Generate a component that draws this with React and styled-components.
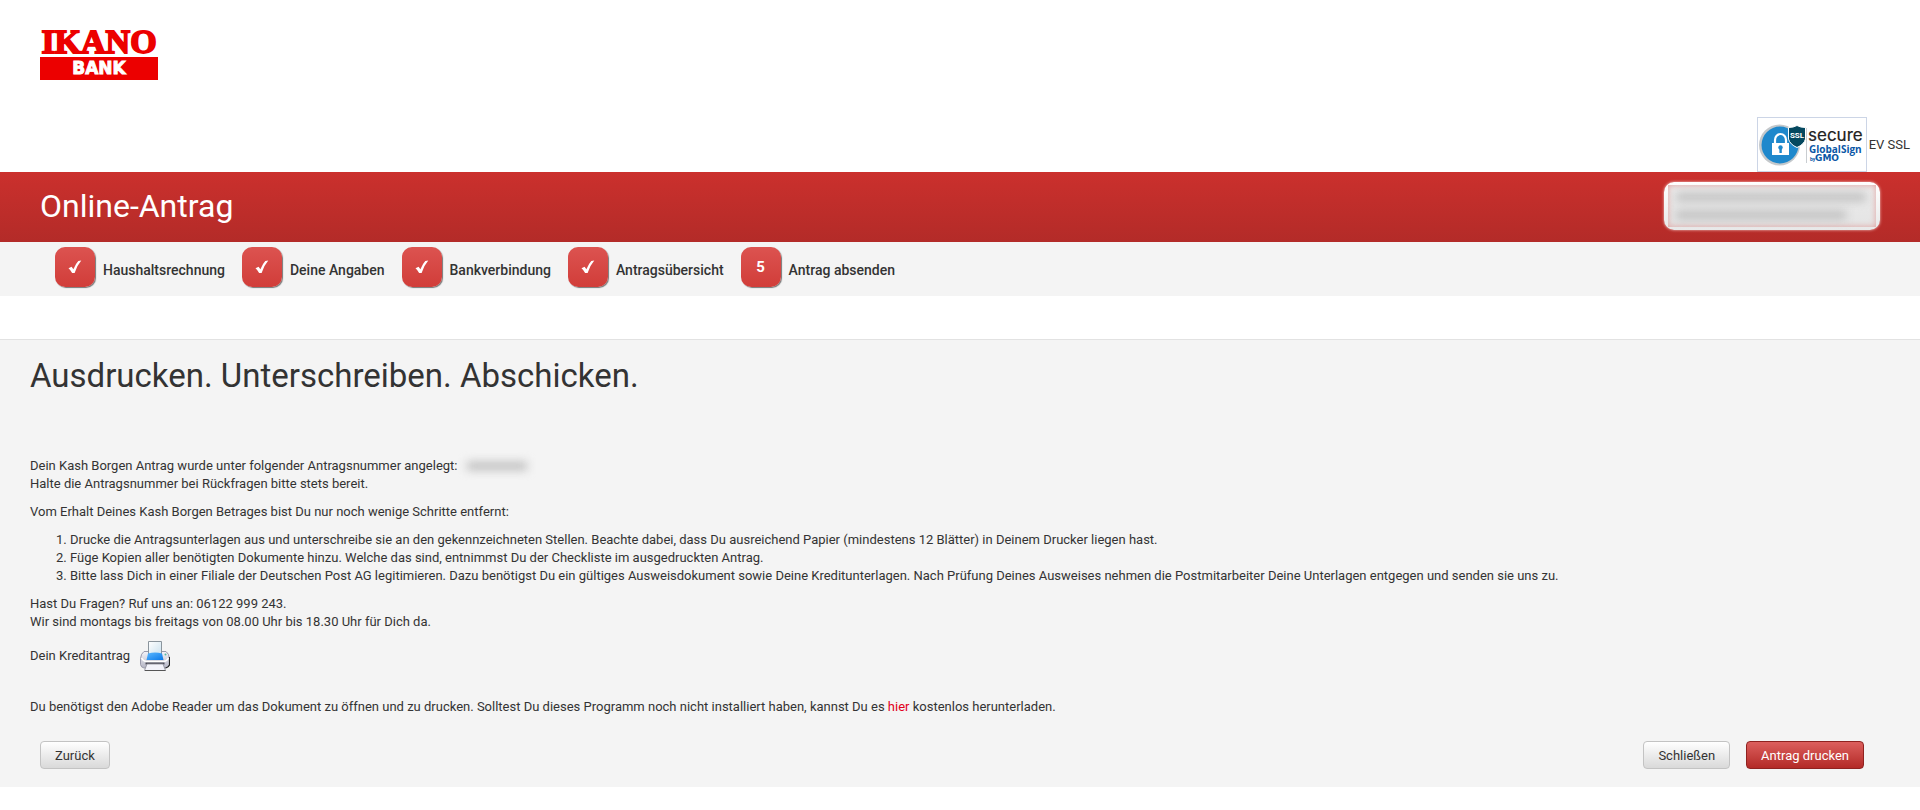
import React from 'react';
import styled, { createGlobalStyle } from 'styled-components';

const steps = [
  { label: 'Haushaltsrechnung', done: true },
  { label: 'Deine Angaben', done: true },
  { label: 'Bankverbindung', done: true },
  { label: 'Antragsübersicht', done: true },
  { label: 'Antrag absenden', done: false },
];

const Logo = () => (
  <LogoSvg width="118" height="50" viewBox="0 0 118 50" role="img" aria-label="Ikano Bank">
    <text
      x="59"
      y="23"
      textAnchor="middle"
      fontFamily="'Liberation Serif', serif"
      fontWeight="bold"
      fontSize="34"
      fill="#ec0000"
      stroke="#ec0000"
      strokeWidth="1.8"
    >
      IKANO
    </text>
    <rect y="27" width="118" height="23" fill="#ec0000" />
    <text
      x="59"
      y="44"
      textAnchor="middle"
      fontFamily="'DejaVu Sans', sans-serif"
      fontWeight="bold"
      fontSize="17"
      fill="#fff"
      stroke="#fff"
      strokeWidth="0.9"
    >
      BANK
    </text>
  </LogoSvg>
);

const SslSeal = () => (
  <svg width="108" height="53" viewBox="0 0 108 53" role="img" aria-label="GlobalSign SSL">
    <circle cx="21.5" cy="27" r="20.500" fill="#c4c8cb" />
    <circle cx="22" cy="27" r="18.5" fill="#1e88cc" />
    <path d="M17 26v-4a5.5 6 0 0 1 11 0v4" fill="none" stroke="#fff" strokeWidth="2.2" />
    <rect x="14" y="25" width="17" height="12" fill="#fff" />
    <circle cx="22.5" cy="29.5" r="2.2" fill="#1e88cc" />
    <path d="M21.4 30h2.4v5h-2.4z" fill="#1e88cc" />
    <path
      d="M30.5 9.500q5 0 8.500-2q3.500 2 8.500 2v11.500q-1.500 5.500-8.500 8.500q-7-3-8.500-8.500z"
      fill="#04485f"
      stroke="#fff"
      strokeWidth="1"
    />
    <text x="39" y="20" textAnchor="middle" fontSize="8" fontWeight="bold" fill="#fff">
      SSL
    </text>
    <path d="M48.5 10v35" stroke="#c9cdd1" />
    <text x="50" y="23" fontFamily="Inter, sans-serif" fontSize="17" fill="#222" stroke="#222" strokeWidth=".2">
      secure
    </text>
    <text x="51" y="35" fontFamily="'Open Sans', sans-serif" fontSize="10" fontWeight="700" fill="#0a57a6">
      GlobalSign
    </text>
    <text x="52" y="43" fontSize="5" fontWeight="bold" fill="#0a57a6">
      by
    </text>
    <text x="57" y="43" fontFamily="'DejaVu Sans', sans-serif" fontSize="9" fontWeight="bold" fill="#0a57a6">
      GMO
    </text>
  </svg>
);

const Check = () => (
  <svg width="14" height="14" viewBox="0 0 14 14" aria-hidden="true">
    <path d="M.5 8.300L3.600 6.700L5.400 9.200Q7.800 3.500 10.300 1L13.300.6Q9 5.500 6.600 13L4.100 13Q2.800 10.300.5 8.300z" fill="#fff" />
  </svg>
);

const Printer = () => (
  <svg width="30" height="30" viewBox="0 0 30 30" aria-hidden="true">
    <defs>
      <linearGradient id="body" x1="0" y1="0" x2="0" y2="1">
        <stop offset="0" stopColor="#f4f4fa" />
        <stop offset="1" stopColor="#b4b4c4" />
      </linearGradient>
      <linearGradient id="tray" x1="0" y1="0" x2="1" y2="1">
        <stop offset="0" stopColor="#5cb8ff" />
        <stop offset="1" stopColor="#0a78e8" />
      </linearGradient>
      <linearGradient id="paper" x1="0" y1="0" x2="1" y2="1">
        <stop offset="0" stopColor="#ffffff" />
        <stop offset="1" stopColor="#c9e0ee" />
      </linearGradient>
    </defs>
    <path d="M4 10.500h22q3 2 3.500 7v6q-.5 3-3.500 3.500h-22q-3-.5-3.500-3.500v-6q.5-5 3.500-7z" fill="url(#body)" stroke="#9a9aac" />
    <path d="M29.500 16v8q-1 2.500-4 3" fill="none" stroke="#222" strokeWidth="1.2" />
    <path d="M8.500.5h13v14h-13z" fill="url(#paper)" stroke="#8a949c" />
    <path d="M8 12.500q7-2 14 0l1.500 6.500h-17z" fill="url(#tray)" />
    <path d="M1.500 17q2 3.500 5 3.500h17q3 0 5-3.500" fill="none" stroke="#fff" strokeWidth="1.5" />
    <path d="M5.500 21.500h19v2h-19z" fill="#4c4c58" />
    <path d="M7 23h16l2.500 6.500h-21z" fill="#f3f3fb" stroke="#8b8b98" strokeWidth=".8" />
    <path d="M5 29.500h20.500" stroke="#555" />
    <circle cx="25.5" cy="13.500" r="1" fill="#54b8a0" />
  </svg>
);

const App = () => {
  return (
    <>
      <GlobalStyle />
      <Header>
        <Logo />
        <Seal>
          <SealFrame>
            <SslSeal />
          </SealFrame>
          EV SSL
        </Seal>
      </Header>

      <TitleBar>
        <Title>Online-Antrag</Title>
        <Summary>
          <SummaryInner>
            <Smudge $width={190} />
            <Smudge $width={170} />
          </SummaryInner>
        </Summary>
      </TitleBar>

      <StepNav>
        {steps.map((step, index) => (
          <Step key={step.label}>
            <StepIcon>{step.done ? <Check /> : index + 1}</StepIcon>
            <StepLabel>{step.label}</StepLabel>
          </Step>
        ))}
      </StepNav>

      <Content>
        <Headline>Ausdrucken. Unterschreiben. Abschicken.</Headline>
        <Text>
          Dein Kash Borgen Antrag wurde unter folgender Antragsnummer angelegt: <HiddenNumber />
          <br />
          Halte die Antragsnummer bei Rückfragen bitte stets bereit.
        </Text>
        <Text>Vom Erhalt Deines Kash Borgen Betrages bist Du nur noch wenige Schritte entfernt:</Text>
        <Instructions>
          <li>
            Drucke die Antragsunterlagen aus und unterschreibe sie an den gekennzeichneten Stellen. Beachte dabei, dass Du
            ausreichend Papier (mindestens 12 Blätter) in Deinem Drucker liegen hast.
          </li>
          <li>
            Füge Kopien aller benötigten Dokumente hinzu. Welche das sind, entnimmst Du der Checkliste im ausgedruckten
            Antrag.
          </li>
          <li>
            Bitte lass Dich in einer Filiale der Deutschen Post AG legitimieren. Dazu benötigst Du ein gültiges
            Ausweisdokument sowie Deine Kreditunterlagen. Nach Prüfung Deines Ausweises nehmen die Postmitarbeiter Deine
            Unterlagen entgegen und senden sie uns zu.
          </li>
        </Instructions>
        <Text>
          Hast Du Fragen? Ruf uns an: 06122 999 243.
          <br />
          Wir sind montags bis freitags von 08.00 Uhr bis 18.30 Uhr für Dich da.
        </Text>
        <PrintRow>
          Dein Kreditantrag
          <PrintLink href="#antrag" aria-label="Kreditantrag drucken">
            <Printer />
          </PrintLink>
        </PrintRow>
        <Text>
          Du benötigst den Adobe Reader um das Dokument zu öffnen und zu drucken. Solltest Du dieses Programm noch nicht
          installiert haben, kannst Du es <DownloadLink href="#reader">hier</DownloadLink> kostenlos herunterladen.
        </Text>
        <Actions>
          <Button type="button">Zurück</Button>
          <ActionGroup>
            <Button type="button">Schließen</Button>
            <Button type="button" $primary>
              Antrag drucken
            </Button>
          </ActionGroup>
        </Actions>
      </Content>
    </>
  );
};
export default App;

const GlobalStyle = createGlobalStyle`
  * {
    box-sizing: border-box;
  }

  body {
    margin: 0;
    background: #fff;
    color: #333;
    font-family: Roboto, 'Liberation Sans', sans-serif;
    font-size: 13px;
    line-height: 18px;
  }

  svg {
    display: block;
    flex: none;
  }
`;

const LogoSvg = styled.svg`
  overflow: visible;
`;

const Header = styled.header`
  display: flex;
  justify-content: space-between;
  padding: 30px 10px 0 40px;
`;

const Seal = styled.div`
  display: flex;
  align-items: center;
  gap: 2px;
  padding-top: 87px;
`;

const SealFrame = styled.div`
  border: 1px solid #ccd5e6;
`;

const TitleBar = styled.div`
  display: flex;
  align-items: center;
  justify-content: space-between;
  height: 70px;
  padding: 0 40px 2px;
  background: linear-gradient(#cb302d, #b32b28);
`;

const Title = styled.h1`
  margin: 0;
  color: #fff;
  font-size: 32px;
  font-weight: 400;
  line-height: 40px;
`;

const Summary = styled.div`
  width: 216px;
  padding: 3px 4px;
  border-radius: 10px;
  background: linear-gradient(#fff, #e8e8e8);
  box-shadow: 0 0 3px #f3c8c7;
`;

const SummaryInner = styled.div`
  display: flex;
  flex-direction: column;
  gap: 10px;
  padding: 8px;
  background: linear-gradient(#ececec, #e4e4e4);
  box-shadow: inset 0 0 6px #e2a09e;
`;

const Smudge = styled.span`
  width: ${props => props.$width}px;
  height: 8px;
  background: #bcbcbc;
  filter: blur(5px);
`;

const StepNav = styled.ol`
  display: flex;
  gap: 17px;
  height: 54px;
  margin: 0;
  padding: 5px 55px;
  list-style: none;
  background: #f4f4f4;
`;

const Step = styled.li`
  display: flex;
  gap: 8px;
`;

const StepIcon = styled.span`
  display: flex;
  align-items: center;
  justify-content: center;
  width: 40px;
  height: 40px;
  border-radius: 10px;
  background: linear-gradient(#dc5350, #d13d39);
  box-shadow: 1px 1px 1px #777;
  color: #fff;
  font-size: 15px;
  font-weight: 700;
`;

const StepLabel = styled.span`
  padding-top: 14px;
  font-size: 14px;
  font-weight: 500;
`;

const Content = styled.main`
  margin-top: 43px;
  padding: 16px 30px 18px;
  border-top: 1px solid #e2e2e2;
  background: #f4f4f4;
`;

const Headline = styled.h2`
  margin: 0 0 61px;
  font-size: 33px;
  font-weight: 400;
  line-height: 40px;
`;

const Text = styled.p`
  margin: 0 0 10px;
`;

const HiddenNumber = styled.span`
  display: inline-block;
  width: 60px;
  height: 8px;
  margin-left: 6px;
  background: #bbb;
  filter: blur(5px);
`;

const Instructions = styled.ol`
  margin: 0 0 10px;
  padding-left: 40px;
`;

const PrintRow = styled.div`
  display: flex;
  align-items: center;
  gap: 10px;
  margin-bottom: 27px;
`;

const PrintLink = styled.a`
  display: block;
`;

const DownloadLink = styled.a`
  color: #e2001a;
  text-decoration: none;
`;

const Actions = styled.div`
  display: flex;
  justify-content: space-between;
  padding: 15px 26px 0 10px;
`;

const ActionGroup = styled.div`
  display: flex;
  gap: 16px;
`;

const Button = styled.button`
  height: 28px;
  padding: 0 14px;
  border: 1px solid ${props => (props.$primary ? '#8f2220' : '#c3c3c3')};
  border-radius: 4px;
  background: ${props => (props.$primary ? 'linear-gradient(#dc5f5d, #b32a27)' : 'linear-gradient(#fff, #d9d9d9)')};
  color: ${props => (props.$primary ? '#fff' : '#333')};
  font-family: inherit;
  font-size: 13px;
  cursor: pointer;
`;
